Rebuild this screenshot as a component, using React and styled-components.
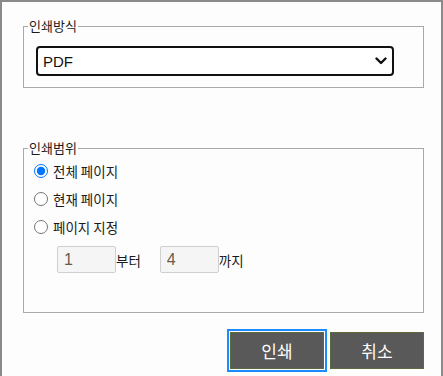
import styled, { createGlobalStyle } from "styled-components";

const GlobalStyle = createGlobalStyle`
  html, body {
    margin: 0;
    padding: 0;
    background: #fdfdfd;
  }
  body {
    font-family: "Liberation Sans", "Noto Sans CJK KR", sans-serif;
    color: #1a1a1a;
  }
`;

const Dialog = styled.div`
  box-sizing: border-box;
  width: 443px;
  min-height: 376px;
  border: 2px solid #8a8a8a;
  border-bottom: none;
  padding: 16px 17px 0 21px;
  background: #fdfdfd;
`;

const Group = styled.fieldset`
  margin: ${(p) => p.$top || 0}px 0 0 0;
  padding: ${(p) => p.$pad};
  border: 1px solid #a9a9a9;
  min-width: 0;
`;

const Legend = styled.legend`
  margin-left: -6px;
  padding: 0 1px;
  font-size: 13px;
  line-height: 16px;
  font-family: "Noto Sans CJK KR", sans-serif;
  color: #1a1a1a;
`;

const SelectWrap = styled.div`
  position: relative;
  margin-left: 2px;
  width: 358px;
`;

const Select = styled.select`
  display: block;
  box-sizing: border-box;
  appearance: none;
  width: 100%;
  height: 30px;
  border: 2px solid #111;
  border-radius: 4px;
  padding: 0 5px;
  background: #fff;
  font-family: "Liberation Sans", sans-serif;
  font-size: 15px;
  color: #111;
  outline: none;
`;

const Chevron = styled.svg`
  position: absolute;
  right: 7px;
  top: 11px;
  pointer-events: none;
`;

const RadioRow = styled.label`
  display: flex;
  align-items: center;
  height: 28px;
  font-family: "Noto Sans CJK KR", sans-serif;
  font-size: 13.5px;
  color: #1a1a1a;
`;

const Radio = styled.input`
  margin: 0 5px 0 0;
  width: 14px;
  height: 14px;
`;

const RangeRow = styled.div`
  display: flex;
  align-items: center;
  margin-top: 5px;
  padding-left: 23px;
  font-family: "Noto Sans CJK KR", sans-serif;
  font-size: 13.5px;
`;

const PageInput = styled.input`
  box-sizing: border-box;
  width: 59px;
  height: 27px;
  border: 1px solid #d0d0d0;
  border-radius: 2px;
  background: #f5f5f5;
  padding: 0 6px;
  font-family: "Liberation Sans", sans-serif;
  font-size: 16px;
  color: #6b5a4a;
`;

const Unit = styled.span`
  margin-right: ${(p) => p.$gap || 0}px;
`;

const Buttons = styled.div`
  display: flex;
  justify-content: flex-end;
  gap: 6px;
  margin-top: 19px;
`;

const Button = styled.button`
  box-sizing: border-box;
  width: 94px;
  height: 37px;
  background: #595959;
  border: 1px solid #5c6a3e;
  color: #fff;
  font-family: "Noto Sans CJK KR", sans-serif;
  font-size: 17px;
  cursor: pointer;
  outline: ${(p) => (p.$focused ? "2px solid #1a8cff" : "none")};
  outline-offset: 1px;
`;

export default function App() {
  return (
    <>
      <GlobalStyle />
      <Dialog>
        <Group $pad="12px 10px 11px 10px">
          <Legend>인쇄방식</Legend>
          <SelectWrap>
            <Select defaultValue="pdf">
              <option value="pdf">PDF</option>
              <option value="printer">프린터</option>
            </Select>
            <Chevron width="12" height="8" viewBox="0 0 12 8">
              <path
                d="M1.5 1.5 L6 6 L10.5 1.5"
                fill="none"
                stroke="#111"
                strokeWidth="2.4"
                strokeLinecap="round"
                strokeLinejoin="round"
              />
            </Chevron>
          </SelectWrap>
        </Group>

        <Group $top={52} $pad="1px 10px 39px 10px">
          <Legend>인쇄범위</Legend>
          <RadioRow>
            <Radio type="radio" name="range" defaultChecked />
            전체 페이지
          </RadioRow>
          <RadioRow>
            <Radio type="radio" name="range" />
            현재 페이지
          </RadioRow>
          <RadioRow>
            <Radio type="radio" name="range" />
            페이지 지정
          </RadioRow>
          <RangeRow>
            <PageInput defaultValue="1" readOnly />
            <Unit $gap={19}>부터</Unit>
            <PageInput defaultValue="4" readOnly />
            <Unit>까지</Unit>
          </RangeRow>
        </Group>

        <Buttons>
          <Button $focused>인쇄</Button>
          <Button>취소</Button>
        </Buttons>
      </Dialog>
    </>
  );
}
